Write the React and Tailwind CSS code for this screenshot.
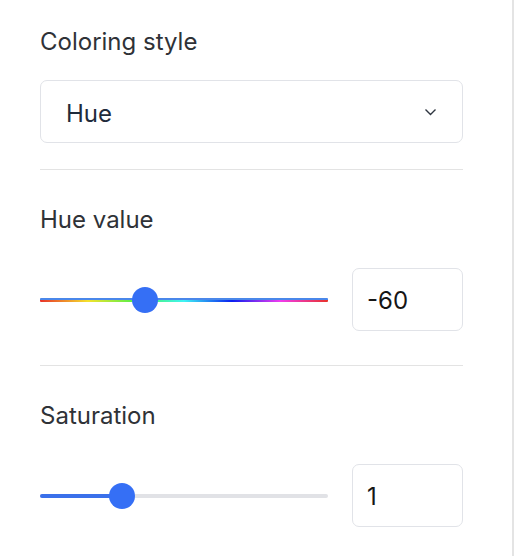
import { useState } from 'react';

const FONT = { fontFamily: 'Inter, "Noto Sans", sans-serif' };

// ─────────────────────────────────────────────────────────────────────────────
// Slider — track + knob, knob sits over the track
// ─────────────────────────────────────────────────────────────────────────────
function Slider({ knobLeft, hue = false, fill = 0 }) {
  return (
    <div className="relative flex-1 h-[26px] flex items-center">
      {hue ? (
        <div className="w-full h-1 flex flex-col overflow-hidden rounded-[1px]">
          <div className="h-[2px] bg-[#4a87ea]" />
          <div className="h-[2px] bg-[linear-gradient(to_right,#e8322a,#f4e22c,#4ff04a,#3ff4f4,#0a1ef0,#f03cf0,#e8322a)]" />
        </div>
      ) : (
        <div className="w-full h-1 rounded-full bg-[#e1e2e6] overflow-hidden">
          <div className="h-full bg-[#3a70ea]" style={{ width: fill }} />
        </div>
      )}
      <div
        className="absolute top-1/2 w-[26px] h-[26px] -translate-x-1/2 -translate-y-1/2 rounded-full bg-[#356ff5]"
        style={{ left: knobLeft }}
      />
    </div>
  );
}

function NumberBox({ value }) {
  return (
    <div className="w-[111px] h-[63px] flex items-center pl-[14px] pt-[2px] border border-[#e1e3e8] rounded-[7px] text-[24px] text-[#161616]">
      {value}
    </div>
  );
}

function Label({ children, className = '' }) {
  return <div className={`h-8 leading-9 text-[24px] text-[#2f3237] ${className}`}>{children}</div>;
}

export default function App() {
  const [style] = useState('Hue');

  return (
    <div className="w-[514px] h-[556px] bg-white border-r-2 border-[#e4e4e4]" style={FONT}>
      <div className="ml-10 w-[423px] pt-6">
        {/* Coloring style */}
        <Label>Coloring style</Label>
        <div className="mt-6 h-[63px] flex items-center justify-between pl-[25px] pr-[25px] border border-[#e1e3e8] rounded-[7px]">
          <span className="pt-[4px] text-[24px] text-[#1f2b3b]">{style}</span>
          <svg width="13" height="8" viewBox="0 0 13 8" fill="none">
            <path d="M1.5 1.5 L6.5 6.5 L11.5 1.5" stroke="#2f3640" strokeWidth="1.4" />
          </svg>
        </div>

        <div className="mt-[26px] h-px bg-[#e3e3e3]" />

        {/* Hue value */}
        <Label className="mt-8">Hue value</Label>
        <div className="mt-[34px] flex items-center gap-6">
          <Slider hue knobLeft={105} />
          <NumberBox value="-60" />
        </div>

        <div className="mt-[34px] h-px bg-[#e3e3e3]" />

        {/* Saturation */}
        <Label className="mt-8">Saturation</Label>
        <div className="mt-[34px] flex items-center gap-6">
          <Slider knobLeft={82} fill={82} />
          <NumberBox value="1" />
        </div>
      </div>
    </div>
  );
}
